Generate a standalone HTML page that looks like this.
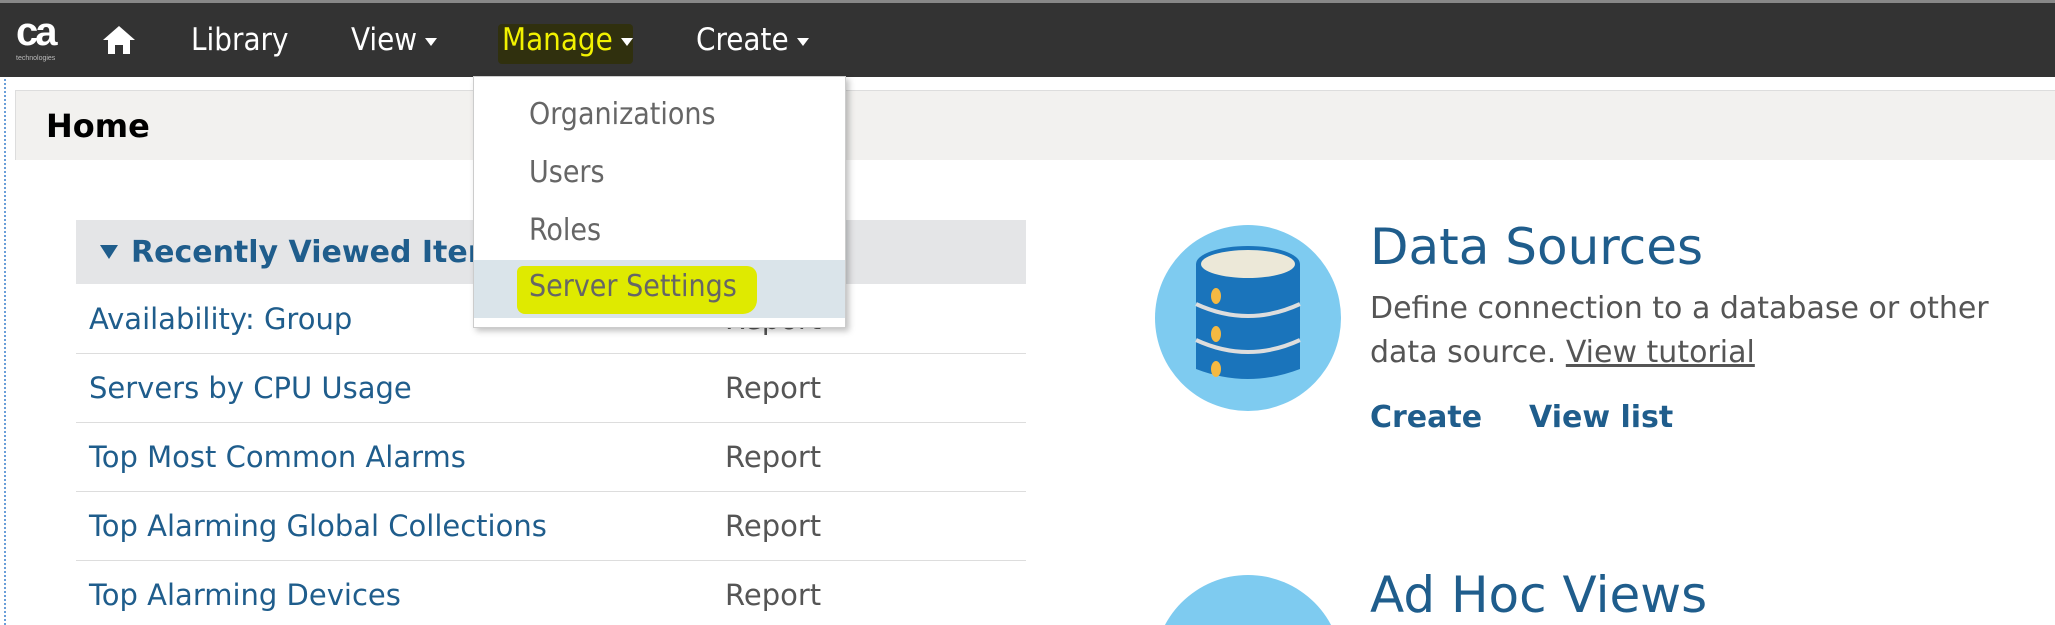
<!DOCTYPE html>
<html style="overflow:hidden;width:2055px;height:625px"><head><style>
*{margin:0;padding:0;box-sizing:border-box}
body{width:2055px;height:625px;overflow:hidden;background:#fff;font-family:"DejaVu Sans","Liberation Sans",sans-serif;position:relative}
.a{position:absolute;white-space:nowrap}
.nav{position:absolute;left:0;top:0;width:2055px;height:77px;background:#333;border-top:3px solid #888}
.nt{color:#fff;font-size:29px;top:22px;font-family:"DejaVu Sans Condensed",sans-serif;font-size:31px}
.car{display:inline-block;width:0;height:0;border-left:6px solid transparent;border-right:6px solid transparent;border-top:8px solid #fff;margin-left:8px;vertical-align:middle}
.blue{color:#1f5d8c}
.row{position:absolute;left:76px;width:950px;height:69px;border-bottom:1px solid #ddd}
.row span{position:absolute;top:17px;font-size:29px;color:#1f5d8c}
.row b{position:absolute;left:649px;top:17px;font-size:29px;color:#555;font-weight:normal}
.dd{position:absolute;left:529px;font-size:30px;color:#666;font-family:"DejaVu Sans Condensed",sans-serif}
</style></head><body>
<div style="position:absolute;left:4px;top:0;width:0;height:625px;border-left:2px dotted #6a9ed8"></div>
<div class="nav"></div>
<div class="a" style="left:16px;top:10px;color:#fff;font:bold 40px 'Liberation Sans',sans-serif;letter-spacing:-3px">ca</div>
<div class="a" style="left:16px;top:55px;color:#bbb;font:7px 'Liberation Sans',sans-serif">technologies</div>
<svg class="a" style="left:102px;top:25px" width="34" height="30" viewBox="0 0 34 30"><path d="M17 1 L33 15 L28 15 L28 29 L21 29 L21 20 L13 20 L13 29 L6 29 L6 15 L1 15 Z" fill="#fff"/></svg>
<div class="a nt" style="left:191px">Library</div>
<div class="a nt" style="left:351px">View<span class="car"></span></div>
<div class="a" style="left:498px;top:24px;width:135px;height:40px;background:#30300e;border-radius:4px"></div>
<div class="a nt" style="left:502px;color:#f2f200">Manage<span class="car"></span></div>
<div class="a nt" style="left:696px">Create<span class="car"></span></div>

<div class="a" style="left:15px;top:90px;width:2040px;height:70px;background:#f2f1ef;border-top:1px solid #ddd;border-left:1px solid #ddd"></div>
<div class="a" style="left:46px;top:107px;font-size:32px;font-weight:bold;color:#000">Home</div>

<div class="a" style="left:76px;top:220px;width:950px;height:64px;background:#e4e5e7"></div>
<div class="a" style="left:100px;top:245px;width:0;height:0;border-left:9px solid transparent;border-right:9px solid transparent;border-top:14px solid #1f5d8c"></div>
<div class="a blue" style="left:131px;top:235px;font-size:30px;font-weight:bold">Recently Viewed Items</div>
<div class="row" style="top:285px"><span style="left:13px">Availability: Group</span><b>Report</b></div>
<div class="row" style="top:354px"><span style="left:13px">Servers by CPU Usage</span><b>Report</b></div>
<div class="row" style="top:423px"><span style="left:13px">Top Most Common Alarms</span><b>Report</b></div>
<div class="row" style="top:492px"><span style="left:13px">Top Alarming Global Collections</span><b>Report</b></div>
<div class="row" style="top:561px;border:none"><span style="left:13px">Top Alarming Devices</span><b>Report</b></div>

<div class="a" style="left:473px;top:76px;width:373px;height:252px;background:#fff;border:1px solid #ccc;box-shadow:3px 3px 6px rgba(0,0,0,.25)"></div>
<div class="a" style="left:474px;top:260px;width:371px;height:58px;background:#dae4ea"></div>
<div class="a" style="left:517px;top:266px;width:240px;height:48px;background:#dfea00;border-radius:6px 10px 14px 8px"></div>
<div class="dd" style="top:97px">Organizations</div>
<div class="dd" style="top:155px">Users</div>
<div class="dd" style="top:213px">Roles</div>
<div class="dd" style="top:269px">Server Settings</div>

<svg class="a" style="left:1154px;top:224px" width="188" height="188" viewBox="0 0 188 188">
<circle cx="94" cy="94" r="93" fill="#7ecbf0"/>
<path d="M42 40 L42 145 Q94 165 146 145 L146 40 Z" fill="#1a74bb"/>
<ellipse cx="94" cy="40" rx="52" ry="18" fill="#1a74bb"/>
<ellipse cx="94" cy="40" rx="47" ry="14" fill="#ece8d8"/>
<path d="M42 80 Q94 104 146 80" stroke="#ddd" stroke-width="4" fill="none"/>
<path d="M42 116 Q94 140 146 116" stroke="#ddd" stroke-width="4" fill="none"/>
<ellipse cx="62" cy="72" rx="5" ry="8" fill="#f5b942"/>
<ellipse cx="62" cy="110" rx="5" ry="8" fill="#f5b942"/>
<ellipse cx="62" cy="145" rx="5" ry="8" fill="#f5b942"/>
</svg>
<div class="a blue" style="left:1370px;top:218px;font-size:50px">Data Sources</div>
<div class="a" style="left:1370px;top:291px;font-size:30px;color:#555">Define connection to a database or other</div>
<div class="a" style="left:1370px;top:335px;font-size:30px;color:#555">data source. <u>View tutorial</u></div>
<div class="a blue" style="left:1370px;top:400px;font-size:30px;font-weight:bold">Create</div>
<div class="a blue" style="left:1529px;top:400px;font-size:30px;font-weight:bold">View list</div>
<div class="a" style="left:1154px;top:575px;width:188px;height:50px;overflow:hidden"><div style="width:188px;height:188px;border-radius:50%;background:#7ecbf0"></div></div>
<div class="a blue" style="left:1370px;top:566px;font-size:50px">Ad Hoc Views</div>
</body></html>
